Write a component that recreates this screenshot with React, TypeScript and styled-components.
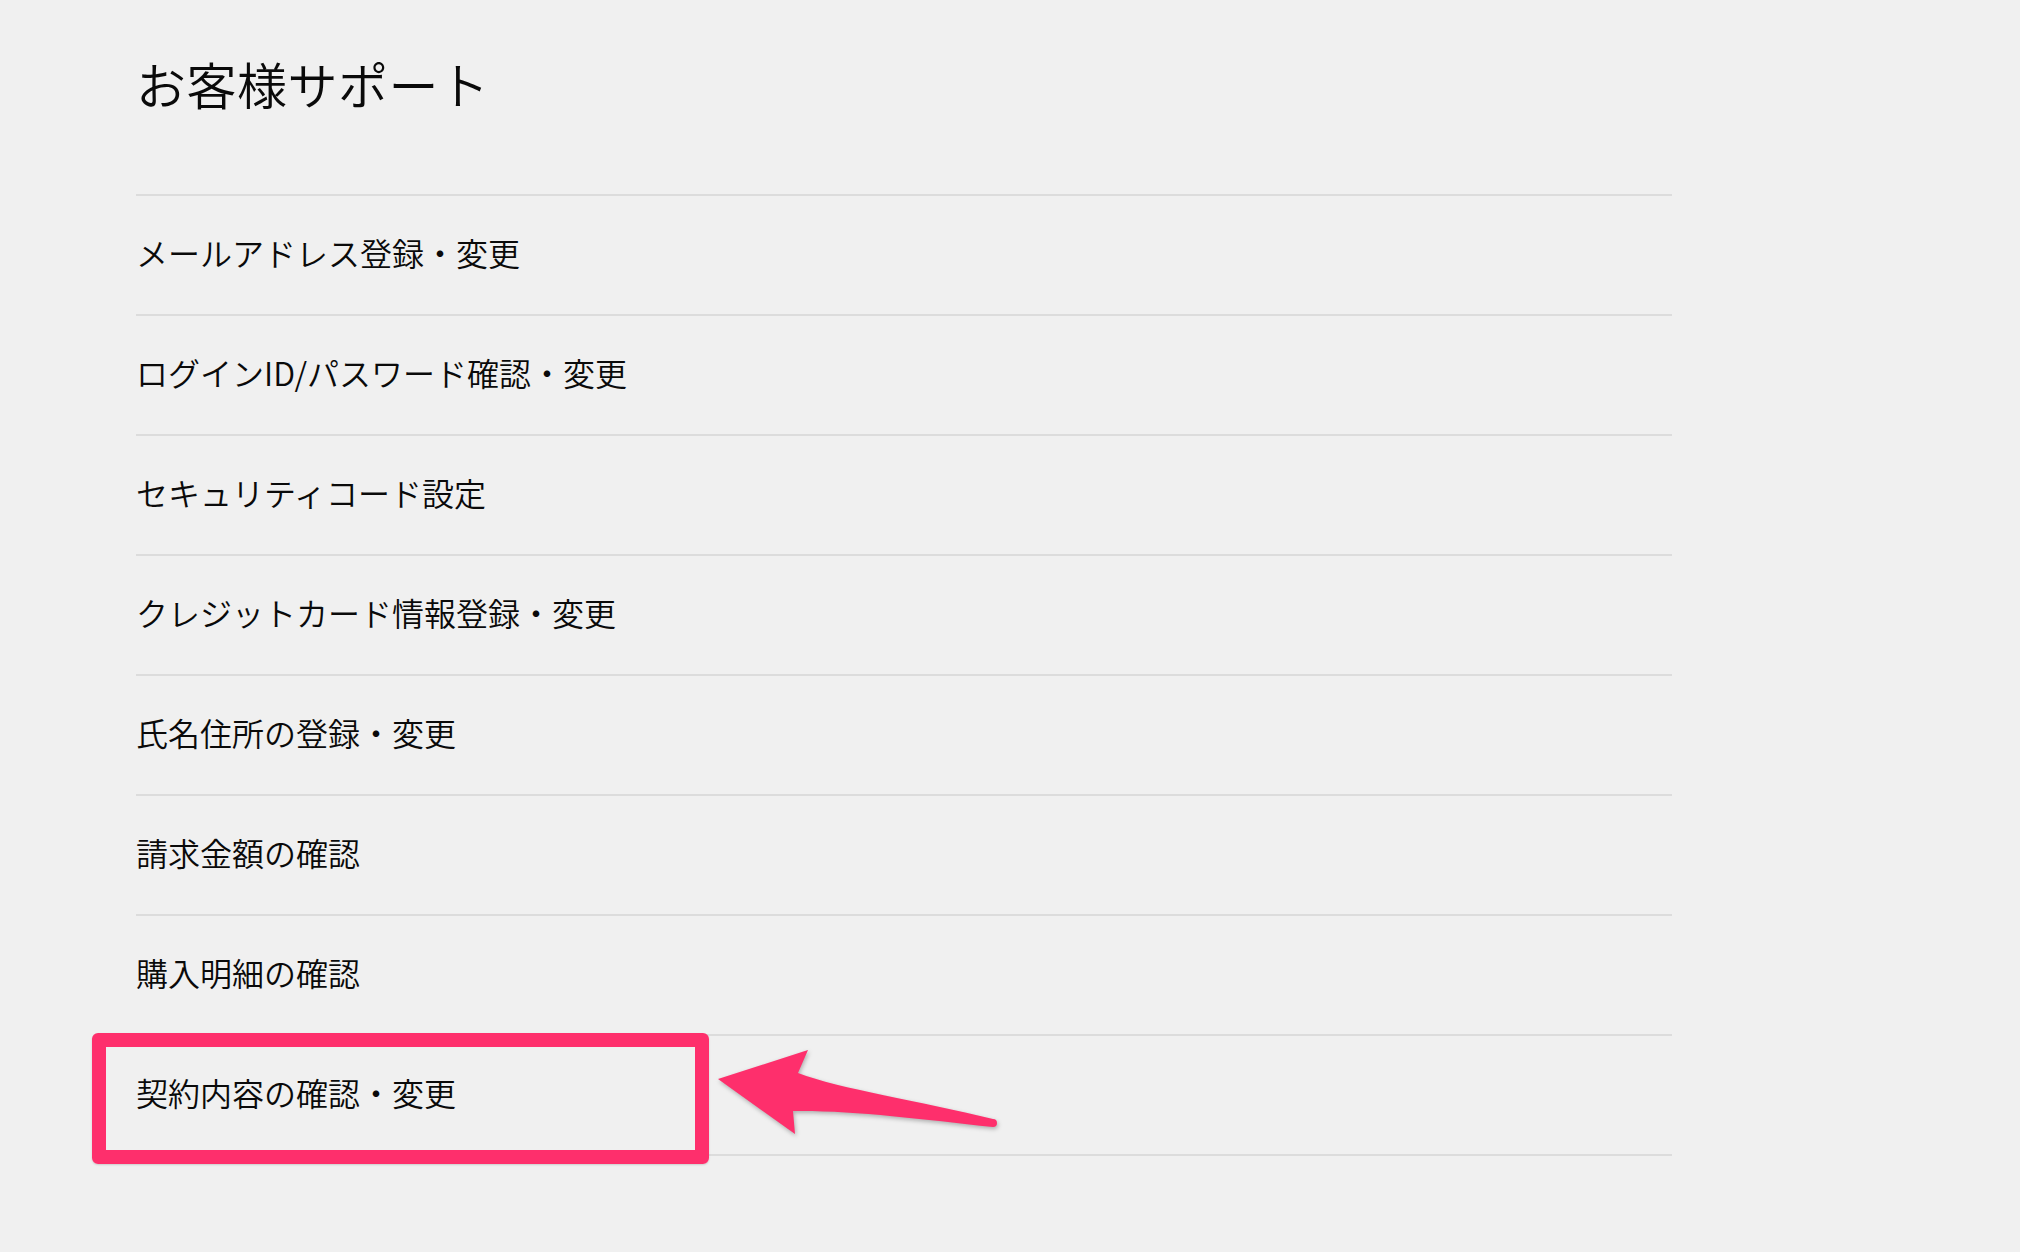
import React from "react";
import styled, { createGlobalStyle } from "styled-components";

const GlobalStyle = createGlobalStyle`
  html, body {
    margin: 0;
    padding: 0;
    background: #f0f0f0;
  }
  body {
    font-family: "Noto Sans CJK JP", "Noto Sans", sans-serif;
    color: #0a0a0a;
  }
`;

const Page = styled.main`
  width: 1536px;
  padding: 46px 0 96px 136px;
`;

const Title = styled.h1`
  margin: 0 0 73px 0;
  font-size: 50px;
  font-weight: 350;
  line-height: 75px;
  letter-spacing: 0.5px;
`;

const List = styled.ul`
  list-style: none;
  margin: 0;
  padding: 0;
  border-top: 2px solid #dcdcdc;
`;

const Row = styled.li`
  position: relative;
  display: flex;
  align-items: center;
  box-sizing: border-box;
  height: 120px;
  padding-bottom: 5px;
  border-bottom: 2px solid #dcdcdc;
  font-size: 32px;
  font-weight: 350;
  line-height: 1.4;
`;

const Highlight = styled.div`
  position: absolute;
  left: -44px;
  top: -3px;
  width: 617px;
  height: 131px;
  box-sizing: border-box;
  border: 14px solid #fe2f6c;
  border-radius: 6px;
  box-shadow: 0 1px 2px rgba(0, 0, 0, 0.15);
  pointer-events: none;
`;

const Arrow = styled.svg`
  position: absolute;
  left: 574px;
  top: 5px;
  width: 300px;
  height: 110px;
  overflow: visible;
  filter: drop-shadow(1px 2px 2px rgba(0, 0, 0, 0.28));
`;

const items = [
  "メールアドレス登録・変更",
  "ログインID/パスワード確認・変更",
  "セキュリティコード設定",
  "クレジットカード情報登録・変更",
  "氏名住所の登録・変更",
  "請求金額の確認",
  "購入明細の確認",
  "契約内容の確認・変更",
];

export default function App() {
  return (
    <>
      <GlobalStyle />
      <Page>
        <Title>お客様サポート</Title>
        <List>
          {items.map((t, i) => (
            <Row key={t}>
              {t}
              {i === items.length - 1 && (
                <>
                  <Highlight />
                  <Arrow viewBox="0 0 300 110">
                    <path
                      d="M 8 38 L 98 9 L 88 32 C 130 48, 210 60, 283 78 A 4 4 0 0 1 283 86 C 210 78, 140 69, 83 70 L 85 93 Z"
                      fill="#fe2f6c"
                    />
                  </Arrow>
                </>
              )}
            </Row>
          ))}
        </List>
      </Page>
    </>
  );
}
